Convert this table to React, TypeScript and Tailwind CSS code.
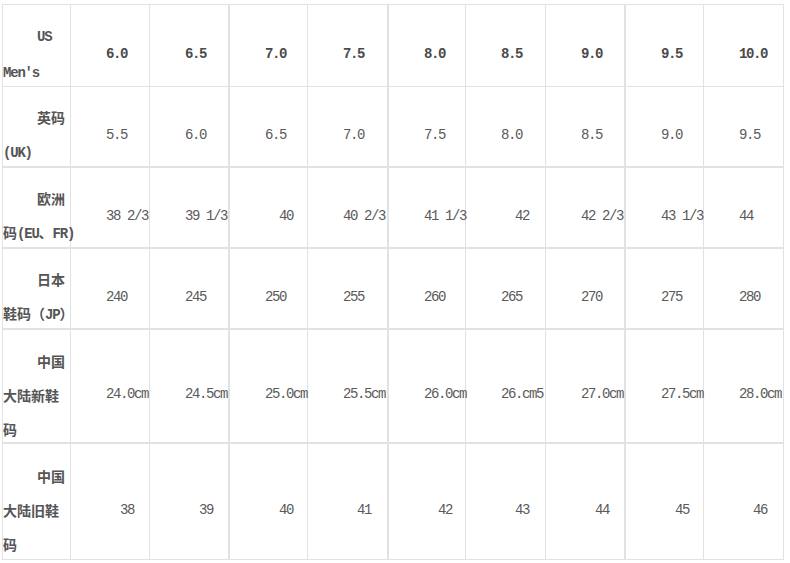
import { Fragment } from "react";

const colWidths = "grid-cols-[68px_79px_80px_78px_81px_77px_80px_80px_78px_80px]";
const rowHeights = "grid-rows-[82px_81px_81px_81px_114px_116px]";

// thick grid lines after these columns / rows (0-based index)
const thickCols = [2, 4, 7];
const thickRows = [1, 2, 3, 4];

type Row = {
  label: string[];
  values: string[];
  bold?: boolean;
};

const rows: Row[] = [
  {
    label: ["US", "Men's"],
    values: ["6.0", "6.5", "7.0", "7.5", "8.0", "8.5", "9.0", "9.5", "10.0"],
    bold: true,
  },
  {
    label: ["英码", "(UK)"],
    values: ["5.5", "6.0", "6.5", "7.0", "7.5", "8.0", "8.5", "9.0", "9.5"],
  },
  {
    label: ["欧洲", "码(EU、FR)"],
    values: ["38 2/3", "39 1/3", "  40", "40 2/3", "41 1/3", "  42", "42 2/3", "43 1/3", "44"],
  },
  {
    label: ["日本", "鞋码（JP）"],
    values: ["240", "245", "250", "255", "260", "265", "270", "275", "280"],
  },
  {
    label: ["中国", "大陆新鞋", "码"],
    values: ["24.0cm", "24.5cm", "25.0cm", "25.5cm", "26.0cm", "26.cm5", "27.0cm", "27.5cm", "28.0cm"],
  },
  {
    label: ["中国", "大陆旧鞋", "码"],
    values: ["  38", "  39", "  40", "  41", "  42", "  43", "  44", "  45", "  46"],
  },
];

const mono = "font-['Liberation_Mono','Noto_Sans_CJK_SC',monospace]";

function Cell({
  col,
  row,
  children,
}: {
  col: number;
  row: number;
  children: React.ReactNode;
}) {
  const right = thickCols.includes(col) ? "border-r-2" : "border-r";
  const bottom = thickRows.includes(row) ? "border-b-2" : "border-b";
  return (
    <div
      className={`${right} ${bottom} flex min-w-0 items-center border-[#e2e2e2] pt-[17px]`}
    >
      {children}
    </div>
  );
}

function Label({ lines }: { lines: string[] }) {
  return (
    <div className="flex flex-col whitespace-nowrap text-[14px] font-bold leading-[34px] text-[#555]">
      {lines.map((line, i) => (
        <span
          key={i}
          className={`${i === 0 ? "pl-[34px]" : "pl-0"} font-['Noto_Sans_CJK_SC',sans-serif]`}
        >
          {splitLatin(line)}
        </span>
      ))}
    </div>
  );
}

// Latin bits go in the narrow mono face, CJK stays full width
function splitLatin(text: string) {
  const parts = text.match(/[A-Za-z0-9'()]+|[^A-Za-z0-9'()]+/g) ?? [];
  return parts.map((p, i) =>
    /^[A-Za-z0-9'()]+$/.test(p) ? (
      <span key={i} className={`${mono} text-[14px] tracking-[-1.2px]`}>
        {p}
      </span>
    ) : (
      <span key={i}>{p}</span>
    ),
  );
}

export default function App() {
  return (
    <div className="h-[563px] w-[790px] bg-white pl-[2px] pt-[4px]">
      <div
        className={`grid ${colWidths} ${rowHeights} w-max border-l border-t border-[#e2e2e2]`}
      >
        {rows.map((row, r) => (
          <Fragment key={r}>
            <Cell col={0} row={r}>
              <Label lines={row.label} />
            </Cell>
            {row.values.map((v, c) => (
              <Cell key={c} col={c + 1} row={r}>
                <span
                  className={`${mono} whitespace-pre pl-[35px] text-[14px] tracking-[-1.4px] ${
                    row.bold ? "font-bold text-[#4a4a4a]" : "text-[#5a5a5a]"
                  }`}
                >
                  {v}
                </span>
              </Cell>
            ))}
          </Fragment>
        ))}
      </div>
    </div>
  );
}
